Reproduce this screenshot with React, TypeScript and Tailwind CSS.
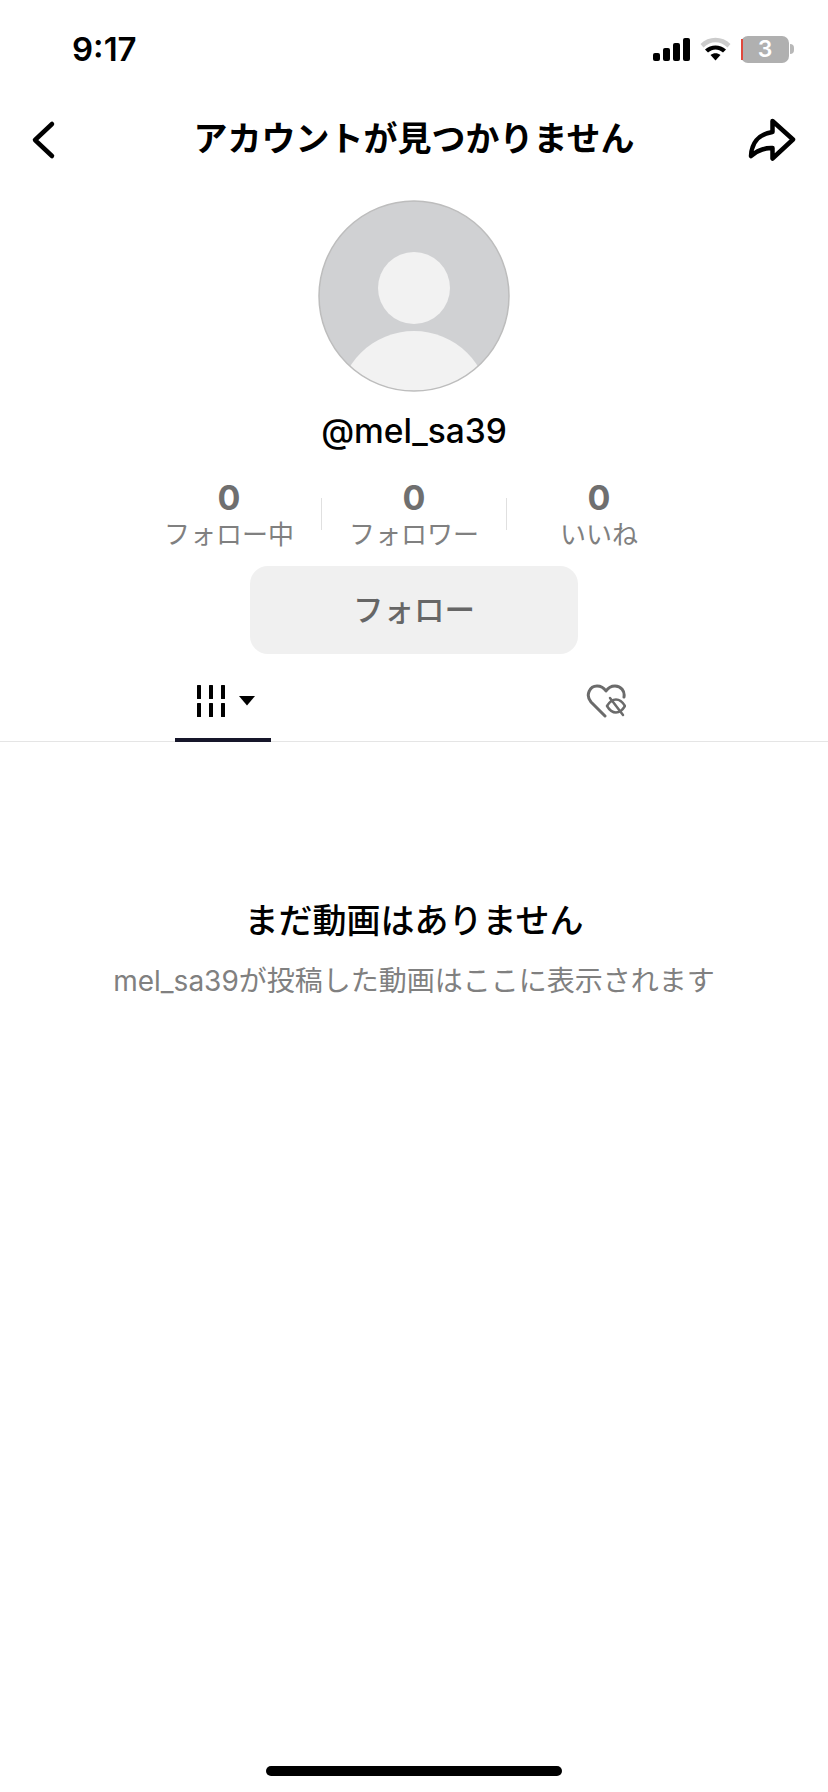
import React from "react";

const FONT = "font-['Inter','Noto_Sans_CJK_JP',sans-serif]";

function StatusIcons() {
  return (
    <div className="flex items-center">
      <svg width="37" height="23" viewBox="0 0 37 23">
        <rect x="0" y="15" width="7" height="8" rx="2" fill="#000" />
        <rect x="10" y="10" width="7" height="13" rx="2" fill="#000" />
        <rect x="20" y="5" width="7" height="18" rx="2" fill="#000" />
        <rect x="30" y="0" width="7" height="23" rx="2" fill="#000" />
      </svg>
      <svg width="31" height="24" viewBox="0 0 31 24" className="ml-[10px]">
        <path d="M.5 7C8.500-1.500 22.500-1.500 30.500 7L27.500 10.500C20 3.500 11 3.500 3.500 10.500Z" fill="#cccccc" />
        <path d="M5 12.500C11 7 20 7 26 12.500L23 15.500C18 11.500 13 11.500 8 15.500Z" fill="#000" />
        <path d="M10.500 18C13.500 15.500 17.500 15.500 20.500 18L15.500 23.500Z" fill="#000" />
      </svg>
      <div className="relative ml-[10px] flex h-[27px] w-[48px] items-center justify-center rounded-[7px] bg-[#b0b0b0] text-[23px] font-semibold leading-none text-white">
        <span className="absolute bottom-[3px] left-0 top-[3px] w-[2px] bg-[#e0483c]" />
        3
      </div>
      <div className="ml-[1px] h-[10px] w-[4px] rounded-r-full bg-[#b8b8b8]" />
    </div>
  );
}

function Stat({ label }: { label: string }) {
  return (
    <div className="flex w-[184px] flex-col items-center">
      <span className="text-[34px] font-bold leading-[40px] text-[#6f6f6f]">0</span>
      <span className="text-[26px] leading-[34px] text-[#808080]">{label}</span>
    </div>
  );
}

export default function App() {
  return (
    <div className={`flex h-[1792px] w-[828px] flex-col overflow-hidden bg-white text-black ${FONT}`}>
      <div className="flex h-[98px] items-center justify-between pl-[72px] pr-[34px]">
        <span className="text-[33px] font-semibold leading-none">9:17</span>
        <StatusIcons />
      </div>

      <div className="grid h-[82px] grid-cols-[1fr_auto_1fr] items-center pl-[20px] pr-[32px]">
        <svg width="48" height="48" viewBox="0 0 48 48" fill="none" stroke="#000" strokeWidth="4.5" strokeLinecap="round" strokeLinejoin="round">
          <path d="M32 9 15 25l17 16" />
        </svg>
        <h1 className="ml-[12px] text-[34px] font-bold leading-none">アカウントが見つかりません</h1>
        <svg width="48" height="48" viewBox="0 0 48 48" fill="none" stroke="#000" strokeWidth="4.5" strokeLinecap="round" strokeLinejoin="round" className="mt-[3px] justify-self-end">
          <path d="M24.500 4 45 22.500 24.500 41.500V31C15 30.500 9 34 3 39 3.500 27 10 17 24.500 15Z" />
        </svg>
      </div>

      <div className="mt-[20px] flex flex-col items-center">
        <svg width="192" height="192" viewBox="0 0 192 192">
          <defs>
            <clipPath id="avatar-clip">
              <circle cx="96" cy="96" r="95" />
            </clipPath>
          </defs>
          <circle cx="96" cy="96" r="95" fill="#d0d1d3" />
          <g clipPath="url(#avatar-clip)">
            <circle cx="96" cy="88" r="36" fill="#f2f2f2" />
            <ellipse cx="96" cy="205" rx="75" ry="74" fill="#f2f2f2" />
          </g>
          <circle cx="96" cy="96" r="95" fill="none" stroke="#bdbdbd" strokeWidth="1.5" />
        </svg>

        <div className="mt-[19px] text-[33.5px] font-medium leading-[40px]">@mel_sa39</div>

        <div className="mt-[27px] flex items-start">
          <Stat label="フォロー中" />
          <div className="mt-[20px] h-[32px] w-px bg-[#e0e0e0]" />
          <Stat label="フォロワー" />
          <div className="mt-[20px] h-[32px] w-px bg-[#e0e0e0]" />
          <Stat label="いいね" />
        </div>

        <button className="mt-[14px] flex h-[88px] w-[328px] items-center justify-center rounded-[18px] bg-[#f0f0f0] text-[30.5px] font-medium text-[#666666]">
          フォロー
        </button>
      </div>

      <div className="flex h-[88px] border-b border-[#e5e5e5]">
        <div className="flex w-[446px] items-center">
          <div className="ml-[175px] mb-[-1px] flex h-[88px] w-[96px] items-center justify-center gap-[14px] border-b-[4px] border-[#16162a] pl-[5px] pt-[9px]">
            <svg width="28" height="32" viewBox="0 0 28 32" fill="#000">
              <rect x="0" y="0" width="4" height="14" rx=".5" />
              <rect x="12" y="0" width="4" height="14" rx=".5" />
              <rect x="24" y="0" width="4" height="14" rx=".5" />
              <rect x="0" y="18" width="4" height="14" rx=".5" />
              <rect x="12" y="18" width="4" height="14" rx=".5" />
              <rect x="24" y="18" width="4" height="14" rx=".5" />
            </svg>
            <svg width="16" height="10" viewBox="0 0 16 10" fill="#000">
              <path d="M0 0h16L8 9.500Z" />
            </svg>
          </div>
        </div>
        <div className="flex flex-1 items-start pl-[140px] pt-[30px]">
          <svg width="40" height="34" viewBox="0 0 40 34" fill="none" stroke="#6b6b6b" strokeWidth="3" strokeLinecap="round" strokeLinejoin="round">
            <path d="M19 32 5 18C-1 11 4 2 11 2c4 0 7 2 9 5 2-3 5-5 9-5 6 0 10 5 9 11" />
            <path d="M21 22c3-5 7-6.500 9-6.500s6 1.500 9 6.500c-3 5-7 6.500-9 6.500s-6-1.500-9-6.500Z" strokeWidth="2.500" />
            <path d="M24 14 37 31" strokeWidth="2.500" />
          </svg>
        </div>
      </div>

      <div className="mt-[159px] flex flex-col items-center">
        <h2 className="text-[34px] font-medium leading-[40px]">まだ動画はありません</h2>
        <p className="mt-[20px] text-[28px] leading-[40px] text-[#808080]">mel_sa39が投稿した動画はここに表示されます</p>
      </div>

      <div className="mt-auto mb-[16px] flex justify-center">
        <div className="h-[10px] w-[296px] rounded-full bg-black" />
      </div>
    </div>
  );
}
